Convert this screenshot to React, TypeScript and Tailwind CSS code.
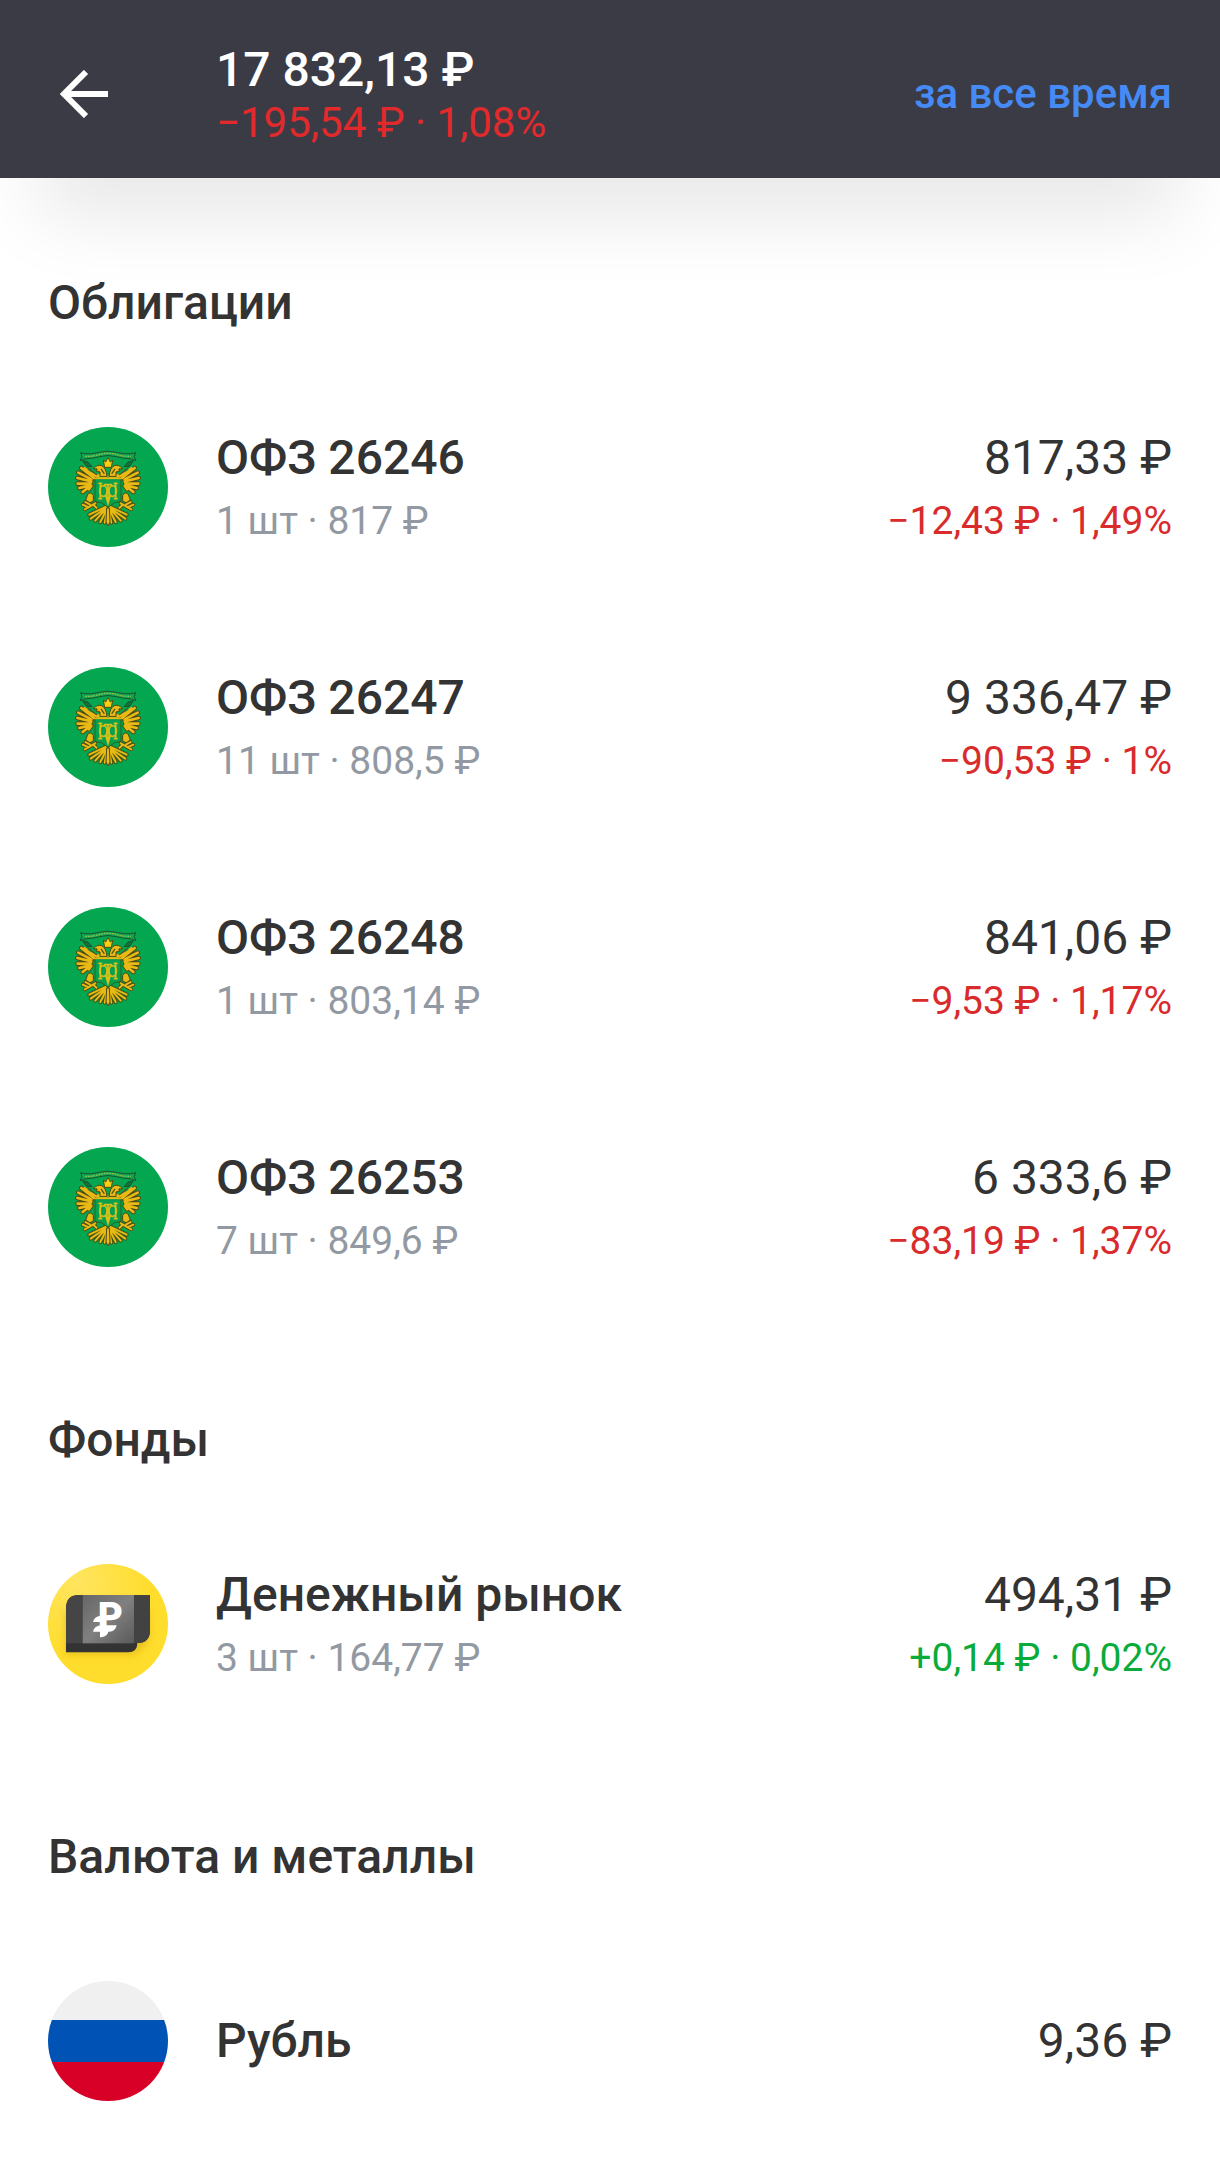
import type { ReactNode } from "react";

interface Asset {
  name: string;
  icon: ReactNode;
  amount: string;
  details?: string;
  change?: string;
  up?: boolean;
}

interface Section {
  title: string;
  assets: Asset[];
}

function BondIcon() {
  return (
    <svg viewBox="30 33 360 360" className="size-[120px] shrink-0" aria-hidden="true">
      <circle cx="210" cy="213" r="180" fill="#05a650" />
      {/* ribbon */}
      <path d="M134 134 l16 4 12 14 -16 0z M286 134 l-16 4 -12 14 16 0z" fill="#14703c" stroke="#17552c" strokeWidth="3" />
      <path d="M128 110 L138 113 Q162 115 184 109 Q210 102 236 109 Q258 115 282 113 L293 110 L288 122 L294 134 L280 129 Q256 128 236 122 Q210 115 184 122 Q164 128 140 129 L126 134 L132 122Z" fill="#16a555" stroke="#17552c" strokeWidth="3" />
      <path d="M142 121 Q166 122 186 115 Q210 109 234 115 Q254 122 278 121" fill="none" stroke="#9cc23c" strokeWidth="4" strokeDasharray="5 3" />
      {[false, true].map((flip) => (
        <g key={String(flip)} transform={flip ? "matrix(-1 0 0 1 420 0)" : undefined} strokeLinecap="round" strokeLinejoin="round">
          {/* wing feathers, dark outline under gold */}
          <path d="M168 186 L130 156 M160 190 L121 170 M160 196 L118 186 M158 202 L119 203 M156 208 L124 216 M154 212 L134 228 M160 210 L152 220" stroke="#4c4a14" strokeWidth="14" />
          <path d="M168 186 L130 156 M160 190 L121 170 M160 196 L118 186 M158 202 L119 203 M156 208 L124 216 M154 212 L134 228 M160 210 L152 220" stroke="#e9b915" strokeWidth="8" />
          <path d="M140 158 Q156 182 204 181" fill="none" stroke="#e9b915" strokeWidth="10" />
          {/* head */}
          <path d="M207 180 Q204 156 192 149 Q178 144 166 158 L178 159 L174 165 L186 168 L186 180Z" fill="#e9b915" stroke="#4c4a14" strokeWidth="3" />
          <path d="M176 176 L152 158 M190 160 L198 172" fill="none" stroke="#5b5716" strokeWidth="4" />
          {/* leg and claw */}
          <path d="M150 234 Q158 226 166 238 L166 256 L154 260 L144 252Z" fill="#e9b915" stroke="#4c4a14" strokeWidth="3" />
          <path d="M140 280 L172 262 M134 266 L152 274 M142 258 L156 266 M168 268 L176 276" stroke="#4c4a14" strokeWidth="11" />
          <path d="M140 280 L172 262 M134 266 L152 274 M142 258 L156 266 M168 268 L176 276" stroke="#e9b915" strokeWidth="6" />
          {/* tail */}
          <path d="M204 272 L154 296 M204 276 L158 308 M204 278 L172 314 M206 280 L187 318 M208 280 L200 320" stroke="#3f5418" strokeWidth="12" />
          <path d="M204 272 L154 296 M204 276 L158 308 M204 278 L172 314 M206 280 L187 318 M208 280 L200 320" stroke="#e9b915" strokeWidth="6" />
        </g>
      ))}
      <path d="M200 154 L196 132 L203 138 L210 124 L217 138 L224 132 L220 154Z" fill="#fbd014" stroke="#5b4a12" strokeWidth="3" />
      <path d="M206 276 H214 L216 318 L210 330 L204 318Z" fill="#e9b915" stroke="#4c4a14" strokeWidth="3" />
      {/* shield */}
      <path d="M171 188 H249 V256 Q230 256 210 274 Q190 256 171 256Z" fill="#07a04e" stroke="#32611f" strokeWidth="3" />
      <path d="M168 187 H252" stroke="#e9b915" strokeWidth="5" />
      <g fill="none" stroke="#dcc018" strokeWidth="5">
        <path d="M187 202 V248 M233 202 V248 M181 202 H193 M227 202 H239 M181 248 H193 M227 248 H239" />
        <ellipse cx="196" cy="225" rx="11" ry="16" />
        <ellipse cx="224" cy="225" rx="11" ry="16" />
        <path d="M198 206 H222 M210 206 V262 M203 236 L210 262 L217 236" />
      </g>
    </svg>
  );
}

function MoneyMarketIcon() {
  return (
    <svg viewBox="30 42 360 360" className="size-[120px] shrink-0" aria-hidden="true">
      <defs>
        <radialGradient id="coin" cx="0.25" cy="0.15" r="0.6">
          <stop offset="0" stopColor="#ffe560" />
          <stop offset="1" stopColor="#ffdd2d" />
        </radialGradient>
        <linearGradient id="plate" x1="0" y1="0" x2="1" y2="1">
          <stop offset="0" stopColor="#666" />
          <stop offset="0.5" stopColor="#808080" />
          <stop offset="1" stopColor="#5a5a5a" />
        </linearGradient>
        <filter id="soft" x="-20%" y="-20%" width="140%" height="150%">
          <feGaussianBlur stdDeviation="12" />
        </filter>
      </defs>
      <circle cx="210" cy="222" r="180" fill="url(#coin)" />
      <path d="M84 180 H330 V270 L290 312 H84Z" fill="#c79a10" opacity="0.5" filter="url(#soft)" />
      <path d="M124 135 H336 V240 Q336 279 298 279 Q298 307 270 307 H84 V175 Q84 135 124 135Z" fill="#333" />
      <path d="M124 135 H134 V280 H84 V175 Q84 135 124 135Z" fill="#454545" />
      <path d="M288 135 H336 V240 Q336 279 298 279 H288Z" fill="#424242" />
      <rect x="134" y="135" width="154" height="145" fill="url(#plate)" />
      <text x="179" y="241" fill="#fff" fontFamily="Roboto, sans-serif" fontWeight="900" fontSize="116">P</text>
      <path d="M188 197 V216 H165 Q168 200 188 197Z M188 226 H236 Q232 245 214 245 H165 Q168 229 188 226Z M186 240 H212 Q210 260 190 262 H186Z" fill="#fff" />
    </svg>
  );
}

function RubleIcon() {
  return (
    <div className="flex size-[120px] shrink-0 flex-col overflow-hidden rounded-full" aria-hidden="true">
      <div className="h-[39px] bg-[#f0f0f0]" />
      <div className="h-[42px] bg-[#0052b4]" />
      <div className="h-[39px] bg-[#d80027]" />
    </div>
  );
}

const sections: Section[] = [
  {
    title: "Облигации",
    assets: [
      { name: "ОФЗ 26246", icon: <BondIcon />, details: "1 шт · 817 ₽", amount: "817,33 ₽", change: "−12,43 ₽ · 1,49%" },
      { name: "ОФЗ 26247", icon: <BondIcon />, details: "11 шт · 808,5 ₽", amount: "9 336,47 ₽", change: "−90,53 ₽ · 1%" },
      { name: "ОФЗ 26248", icon: <BondIcon />, details: "1 шт · 803,14 ₽", amount: "841,06 ₽", change: "−9,53 ₽ · 1,17%" },
      { name: "ОФЗ 26253", icon: <BondIcon />, details: "7 шт · 849,6 ₽", amount: "6 333,6 ₽", change: "−83,19 ₽ · 1,37%" },
    ],
  },
  {
    title: "Фонды",
    assets: [
      { name: "Денежный рынок", icon: <MoneyMarketIcon />, details: "3 шт · 164,77 ₽", amount: "494,31 ₽", change: "+0,14 ₽ · 0,02%", up: true },
    ],
  },
  {
    title: "Валюта и металлы",
    assets: [{ name: "Рубль", icon: <RubleIcon />, amount: "9,36 ₽" }],
  },
];

function AssetRow({ asset }: { asset: Asset }) {
  return (
    <li className={`flex gap-12 ${asset.details ? "items-start" : "items-center"}`}>
      {asset.icon}
      <div className="min-w-0 flex-1">
        <h3 className="text-[48px] leading-[62px] font-medium">{asset.name}</h3>
        {asset.details && <p className="text-[39px] leading-[64px] text-[#9299a2]">{asset.details}</p>}
      </div>
      <div className="text-right whitespace-nowrap">
        <p className="text-[48px] leading-[62px]">{asset.amount}</p>
        {asset.change && (
          <p className={`text-[39px] leading-[64px] ${asset.up ? "text-[#0aab3a]" : "text-[#d92b2b]"}`}>
            {asset.change}
          </p>
        )}
      </div>
    </li>
  );
}

export default function App() {
  return (
    <div className="min-h-screen bg-white font-['Roboto',sans-serif] text-[#333]">
      <header className="flex h-[178px] items-center bg-[#3b3b45] px-12 pt-[10px] shadow-[0_75px_80px_-40px_rgba(0,0,0,0.1)]">
        <button type="button" aria-label="Назад" className="w-[168px] pl-3">
          <svg viewBox="0 0 48 48" className="size-12" fill="none" stroke="#fff" strokeWidth="6">
            <path d="M26 2 L4 24 L26 46 M4 24 H48" />
          </svg>
        </button>
        <div className="flex-1 pt-[6px] whitespace-nowrap">
          <h1 className="text-[48px] leading-[52px] font-medium text-white">17 832,13 ₽</h1>
          <p className="text-[42px] leading-[54px] text-[#e22a2c]">−195,54 ₽ · 1,08%</p>
        </div>
        <button type="button" className="text-[42px] leading-[52px] font-medium text-[#468bf5]">
          за все время
        </button>
      </header>

      <main className="flex flex-col gap-[139px] px-12 pt-[97px] pb-[72px]">
        {sections.map((section) => (
          <section key={section.title}>
            <h2 className="text-[48px] leading-[56px] font-medium">{section.title}</h2>
            <ul className="mt-24 flex flex-col gap-[114px]">
              {section.assets.map((asset) => (
                <AssetRow key={asset.name} asset={asset} />
              ))}
            </ul>
          </section>
        ))}
      </main>
    </div>
  );
}
